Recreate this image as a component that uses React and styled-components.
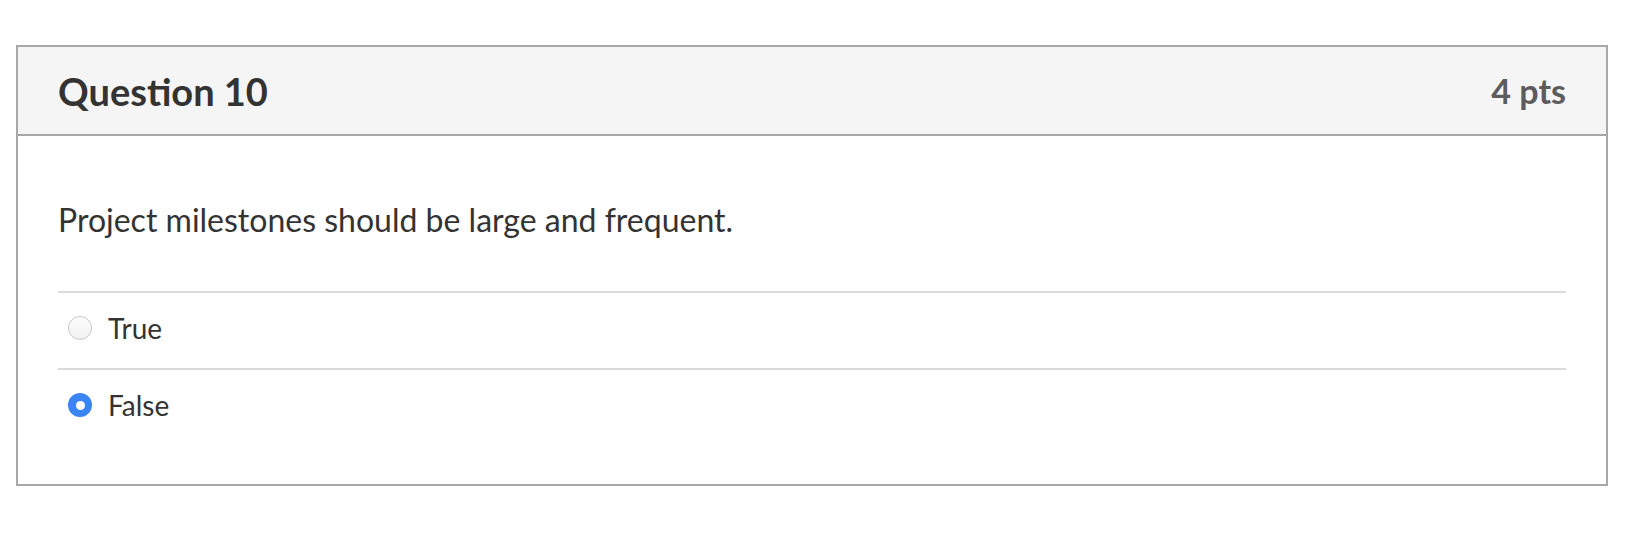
import React, { useState } from "react";
import styled, { createGlobalStyle } from "styled-components";

const GlobalStyle = createGlobalStyle`
  * {
    box-sizing: border-box;
  }
  body {
    margin: 0;
    background: #ffffff;
    font-family: Lato, "Open Sans", Arial, sans-serif;
    color: #333333;
  }
`;

const Page = styled.div`
  padding: 45px 21px 0 16px;
`;

const QuestionCard = styled.div`
  border: 2px solid #a8a8a8;
  background: #ffffff;
`;

const CardHeader = styled.div`
  display: flex;
  align-items: center;
  justify-content: space-between;
  height: 89px;
  padding: 0 40px 0 40px;
  background: #f5f5f5;
  border-bottom: 2px solid #a8a8a8;
`;

const Title = styled.h2`
  margin: 0;
  font-size: 38px;
  font-weight: 700;
  color: #333333;
`;

const Points = styled.span`
  font-size: 34px;
  font-weight: 700;
  color: #5c5c5c;
`;

const CardBody = styled.div`
  padding: 63px 40px 39px 40px;
`;

const QuestionText = styled.p`
  margin: 0 0 50px 0;
  font-size: 32px;
  line-height: 42px;
  color: #333333;
`;

const AnswerList = styled.div`
  display: flex;
  flex-direction: column;
`;

const AnswerRow = styled.label`
  display: flex;
  align-items: center;
  gap: 16px;
  height: 77px;
  padding: 0 0 5px 10px;
  border-top: 2px solid #dadada;
  cursor: pointer;
`;

const RadioDot = styled.span`
  flex: none;
  width: 24px;
  height: 24px;
  border-radius: 50%;
  display: flex;
  align-items: center;
  justify-content: center;
  background: ${({ $checked }) =>
    $checked ? "#3b84f6" : "linear-gradient(#fdfdfd, #f1f1f1)"};
  border: ${({ $checked }) => ($checked ? "none" : "1px solid #c9c9c9")};

  &::after {
    content: "";
    display: ${({ $checked }) => ($checked ? "block" : "none")};
    width: 9px;
    height: 9px;
    border-radius: 50%;
    background: #ffffff;
  }
`;

const AnswerText = styled.span`
  font-size: 28px;
  color: #333333;
`;

const answers = ["True", "False"];

export default function App() {
  const [selected, setSelected] = useState("False");

  return (
    <>
      <GlobalStyle />
      <Page>
        <QuestionCard>
          <CardHeader>
            <Title>Question 10</Title>
            <Points>4 pts</Points>
          </CardHeader>
          <CardBody>
            <QuestionText>
              Project milestones should be large and frequent.
            </QuestionText>
            <AnswerList>
              {answers.map((answer) => (
                <AnswerRow key={answer} onClick={() => setSelected(answer)}>
                  <RadioDot $checked={selected === answer} />
                  <AnswerText>{answer}</AnswerText>
                </AnswerRow>
              ))}
            </AnswerList>
          </CardBody>
        </QuestionCard>
      </Page>
    </>
  );
}
